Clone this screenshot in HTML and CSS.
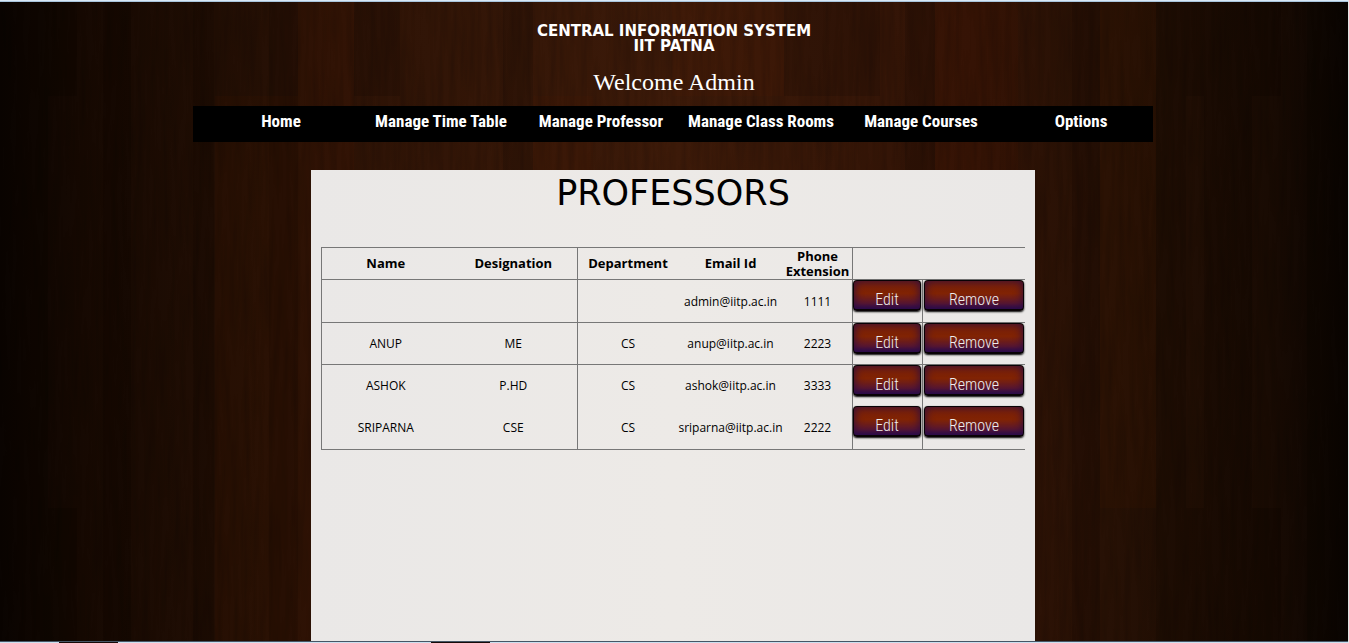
FILE: index.html
```html
<!DOCTYPE html>
<html lang="en">
<head>
<meta charset="utf-8">
<title>Professors - Central Information System</title>
<link rel="stylesheet" href="styles.css">
</head>
<body>
<svg class="wood" aria-hidden="true" preserveAspectRatio="none" viewBox="0 0 1349 643">
  <defs>
    <linearGradient id="tone">
      <stop offset="0" stop-color="#0c0502"/>
      <stop offset="0.06" stop-color="#160902"/>
      <stop offset="0.16" stop-color="#210e04"/>
      <stop offset="0.25" stop-color="#2d1306"/>
      <stop offset="0.5" stop-color="#3c1a09"/>
      <stop offset="0.72" stop-color="#311306"/>
      <stop offset="0.82" stop-color="#271105"/>
      <stop offset="0.94" stop-color="#190b03"/>
      <stop offset="1" stop-color="#0b0502"/>
    </linearGradient>
    <filter id="grain" x="0" y="0" width="100%" height="100%">
      <feTurbulence type="fractalNoise" baseFrequency="0.16 0.012" numOctaves="3" seed="8"/>
      <feColorMatrix values="0 0 0 0 0  0 0 0 0 0  0 0 0 0 0  1.6 0 0 0 -0.6"/>
    </filter>
  </defs>
  <rect width="1349" height="643" fill="url(#tone)"/>
  <g fill="#000" fill-opacity="0.12">
    <path d="M0 0h77v96H0zM103 0h28v643h-28zM193 0h21v643h-21zM269 0h29v643h-29zM354 0h28v96h-28zM382 0h18v96h-18zM503 0h30v643h-30zM784 0h96v96h-96zM905 0h30v643h-30zM1072 0h28v643h-28zM1156 0h30v643h-30zM1186 0h95v96h-95zM1307 0h42v643h-42zM0 96h48v412H0zM1204 96h48v412h-48zM1186 508h95v135h-95zM0 508h77v135H0z"/>
  </g>
  <g fill="#7a2a08" fill-opacity="0.06">
    <path d="M215 96h85v547h-85zM298 0h56v643h-56zM533 96h60v547h-60zM672 0h112v96H672zM935 0h83v643h-83zM1100 0h56v508h-56z"/>
  </g>
  <rect width="1349" height="643" filter="url(#grain)" opacity="0.18"/>
</svg>
<div class="edge-top"></div>
<header class="header">
  <h1 class="title">CENTRAL INFORMATION SYSTEM<br>IIT PATNA</h1>
  <p class="welcome">Welcome Admin</p>
</header>
<nav class="nav">
  <a href="#">Home</a>
  <a href="#">Manage Time Table</a>
  <a href="#">Manage Professor</a>
  <a href="#">Manage Class Rooms</a>
  <a href="#">Manage Courses</a>
  <a href="#">Options</a>
</nav>
<main class="panel">
  <h2 class="heading">PROFESSORS</h2>
  <table class="professors">
    <colgroup>
      <col><col><col class="col-dept"><col class="col-email"><col class="col-phone"><col class="col-edit"><col class="col-remove">
    </colgroup>
    <thead>
      <tr><th>Name</th><th>Designation</th><th class="line">Department</th><th>Email Id</th><th>Phone Extension</th><th class="line" colspan="2"></th></tr>
    </thead>
    <tbody>
      <tr class="first"><td></td><td></td><td class="line"></td><td>admin@iitp.ac.in</td><td>1111</td><td class="line action"><button class="btn">Edit</button></td><td class="line action"><button class="btn">Remove</button></td></tr>
      <tr><td>ANUP</td><td>ME</td><td class="line">CS</td><td>anup@iitp.ac.in</td><td>2223</td><td class="line action"><button class="btn">Edit</button></td><td class="line action"><button class="btn">Remove</button></td></tr>
      <tr><td>ASHOK</td><td>P.HD</td><td class="line">CS</td><td>ashok@iitp.ac.in</td><td>3333</td><td class="line action"><button class="btn">Edit</button></td><td class="line action"><button class="btn">Remove</button></td></tr>
      <tr class="joined"><td>SRIPARNA</td><td>CSE</td><td class="line">CS</td><td>sriparna@iitp.ac.in</td><td>2222</td><td class="line action"><button class="btn">Edit</button></td><td class="line action"><button class="btn">Remove</button></td></tr>
    </tbody>
  </table>
</main>
<footer class="edge-bottom"><span class="tab"></span><span class="tab tab-second"></span></footer>
</body>
</html>
```
FILE: styles.css
```css
* {
  box-sizing: border-box;
}

body {
  margin: 0;
  min-height: 100vh;
  display: flex;
  flex-direction: column;
  align-items: center;
  background: #1b0b04;
  font-family: "Open Sans", "Noto Sans", sans-serif;
  border-right: 1px solid #e4e4e4;
}

.wood {
  position: absolute;
  inset: 0;
  z-index: -1;
  width: 100%;
  height: 100%;
}

.edge-top {
  width: 100%;
  height: 2px;
  background: #d8e8f6;
  border-bottom: 1px solid #a8c4dc;
}

.header {
  padding-top: 22px;
  color: #fff;
  text-align: center;
}

.title {
  margin: 0;
  font: bold 15px/15px "DejaVu Sans", sans-serif;
}

.welcome {
  margin: 14px 0 10px;
  font: 24px/28px "Liberation Serif", serif;
}

.nav {
  display: grid;
  grid-template-columns: repeat(6, 160px);
  width: 960px;
  height: 36px;
  padding-left: 8px;
  margin-right: 2px;
  background: #000;
}

.nav a {
  color: #fff;
  font: bold 17px/30px "Liberation Sans Narrow", "Roboto Condensed", "Liberation Sans", sans-serif;
  text-align: center;
  text-decoration: none;
  white-space: nowrap;
}

.panel {
  flex: 1;
  width: 724px;
  margin: 28px 2px 0 0;
  padding: 0 10px 24px;
  background: linear-gradient(90deg, #eae8e7, #edeae7 50%, #eae8e7);
}

.heading {
  margin: 0 0 31px;
  font: 35px/46px "DejaVu Sans", sans-serif;
  text-align: center;
}

.professors {
  width: 100%;
  table-layout: fixed;
  border-collapse: separate;
  border-spacing: 0;
  border-left: 1px solid #777;
  border-bottom: 1px solid #777;
  font-size: 12px;
  line-height: 15px;
  text-align: center;
}

.col-dept {
  width: 101px;
}

.col-email {
  width: 105px;
}

.col-phone {
  width: 69px;
}

.col-edit {
  width: 70px;
}

.col-remove {
  width: 103px;
}

.professors th,
.professors td {
  padding: 0;
  border-top: 1px solid #777;
}

.professors th {
  height: 32px;
  font-size: 13px;
}

.professors td {
  height: 42px;
}

.professors .first td {
  height: 43px;
}

.professors .joined td {
  height: 43px;
  border-top: 0;
}

.professors .line {
  border-left: 1px solid #777;
}

.professors .action {
  padding: 0 1px 0 0;
  vertical-align: top;
}

.professors .action:last-child {
  padding-left: 1px;
}

.btn {
  display: block;
  width: 100%;
  height: 31px;
  padding: 10px 0 0;
  border: 1px solid #080205;
  border-bottom-width: 2px;
  border-radius: 4px;
  background: linear-gradient(#7d2105, #802304 45%, #5a1730 80%, #2d0b50);
  box-shadow: inset 0 0 10px #2b0b42, 0 1px 2px #000;
  color: #eee;
  font: 300 16px/18px "Liberation Sans Narrow", "Roboto Condensed", "Liberation Sans", sans-serif;
}

.edge-bottom {
  position: relative;
  width: 100%;
  height: 2px;
  border-top: 1px solid #465666;
  background: #cbdfee;
}

.tab {
  position: absolute;
  top: 0;
  left: 59px;
  width: 59px;
  height: 1px;
  background: #160a08;
}

.tab-second {
  left: 431px;
}
```
